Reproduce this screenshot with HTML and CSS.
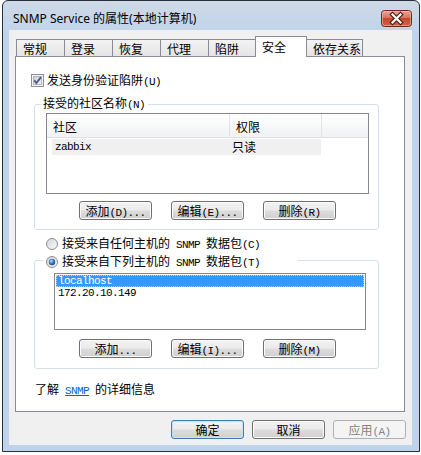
FILE: index.html
```html
<!DOCTYPE html>
<html>
<head>
  <meta charset="utf-8">
  <title>SNMP Service 的属性(本地计算机)</title>
  <link rel="stylesheet" href="styles.css">
</head>
<body>
  <div class="window">
    <div class="titlebar">
      <span class="title">SNMP Service 的属性(本地计算机)</span>
      <div class="close-btn">
        <svg width="31" height="17" viewBox="0 0 31 17">
          <defs>
            <linearGradient id="closeBg" x1="0" y1="0" x2="0" y2="1">
              <stop offset="0" stop-color="#e9aa9c"/>
              <stop offset="0.45" stop-color="#d7735f"/>
              <stop offset="0.5" stop-color="#c8472f"/>
              <stop offset="1" stop-color="#d0644a"/>
            </linearGradient>
          </defs>
          <rect x="0.5" y="0.5" width="30" height="16" rx="3" fill="url(#closeBg)" stroke="#6b2a20"/>
          <rect x="1.5" y="1.5" width="28" height="14" rx="2" fill="none" stroke="#f0b9ac" stroke-opacity="0.6"/>
          <path d="M11.5 4.5 L19.5 12.5 M19.5 4.5 L11.5 12.5" stroke="#4a1a12" stroke-width="4.4" stroke-linecap="square"/>
          <path d="M11.5 4.5 L19.5 12.5 M19.5 4.5 L11.5 12.5" stroke="#ffffff" stroke-width="2.2" stroke-linecap="square"/>
        </svg>
      </div>
    </div>

    <div class="client">
      <div class="tabs">
        <div class="tab">常规</div>
        <div class="tab">登录</div>
        <div class="tab">恢复</div>
        <div class="tab">代理</div>
        <div class="tab">陷阱</div>
        <div class="tab active">安全</div>
        <div class="tab">依存关系</div>
      </div>

      <div class="panel">
        <div class="check-row">
          <svg width="13" height="13" viewBox="0 0 13 13">
            <defs>
              <linearGradient id="cbIn" x1="0" y1="0" x2="1" y2="1">
                <stop offset="0" stop-color="#cbcfd5"/>
                <stop offset="1" stop-color="#f6f6f6"/>
              </linearGradient>
            </defs>
            <rect x="0.5" y="0.5" width="12" height="12" fill="#f4f4f4" stroke="#8e8f8f"/>
            <rect x="2.5" y="2.5" width="8" height="8" fill="url(#cbIn)" stroke="#b3b7bd"/>
            <path d="M3.2 6.3 L5.4 9 L10 3.2" fill="none" stroke="#4b5d8c" stroke-width="1.9"/>
          </svg>
          <span class="label">发送身份验证陷阱<span class="m">(U)</span></span>
        </div>

        <fieldset class="group">
          <legend class="group-title community-title">接受的社区名称<span class="m">(N)</span></legend>
          <div class="listview">
            <div class="lv-header">
              <div class="lv-col">社区</div>
              <div class="lv-col">权限</div>
              <div class="lv-col last"></div>
            </div>
            <div class="lv-row">
              <div class="lv-cell m">zabbix</div>
              <div class="lv-cell">只读</div>
            </div>
          </div>
          <div class="btn-row">
            <div class="btn">添加<span class="m">(D)...</span></div>
            <div class="btn">编辑<span class="m">(E)...</span></div>
            <div class="btn">删除<span class="m">(R)</span></div>
          </div>
        </fieldset>

        <div class="radio-row">
          <svg width="12" height="12" viewBox="0 0 12 12">
            <defs>
              <linearGradient id="rbOff" x1="0" y1="0" x2="1" y2="1">
                <stop offset="0" stop-color="#d2d4d8"/>
                <stop offset="1" stop-color="#fbfbfb"/>
              </linearGradient>
            </defs>
            <circle cx="6" cy="6" r="5.5" fill="url(#rbOff)" stroke="#8f8f8f"/>
          </svg>
          <span class="label">接受来自任何主机的<span class="m"> SNMP </span>数据包<span class="m">(C)</span></span>
        </div>

        <fieldset class="group hosts-group">
          <legend class="group-title hosts-title">
            <div class="radio-row inline">
              <svg width="12" height="12" viewBox="0 0 12 12">
                <defs>
                  <linearGradient id="rbOn" x1="0" y1="0" x2="1" y2="1">
                    <stop offset="0" stop-color="#d2d4d8"/>
                    <stop offset="1" stop-color="#fbfbfb"/>
                  </linearGradient>
                  <radialGradient id="rbDot" cx="0.4" cy="0.35" r="0.7">
                    <stop offset="0" stop-color="#b8e2fa"/>
                    <stop offset="0.5" stop-color="#3d84c6"/>
                    <stop offset="1" stop-color="#163f74"/>
                  </radialGradient>
                </defs>
                <circle cx="6" cy="6" r="5.5" fill="url(#rbOn)" stroke="#8f8f8f"/>
                <circle cx="6" cy="6" r="3.2" fill="url(#rbDot)"/>
              </svg>
              <span class="label">接受来自下列主机的<span class="m"> SNMP </span>数据包<span class="m">(T)</span></span>
            </div>
          </legend>
          <div class="listbox">
            <div class="lb-item selected m">localhost</div>
            <div class="lb-item m">172.20.10.149</div>
          </div>
          <div class="btn-row hosts-btns">
            <div class="btn">添加<span class="m">...</span></div>
            <div class="btn">编辑<span class="m">(I)...</span></div>
            <div class="btn">删除<span class="m">(M)</span></div>
          </div>
        </fieldset>

        <p class="info">了解<span class="m"> <a href="#" class="link">SNMP</a> </span>的详细信息</p>
      </div>

      <div class="footer">
        <div class="btn default">确定</div>
        <div class="btn">取消</div>
        <div class="btn disabled">应用<span class="m">(A)</span></div>
      </div>
    </div>
  </div>
</body>
</html>
```

FILE: styles.css
```css
* {
  margin: 0;
  padding: 0;
  box-sizing: border-box;
}

body {
  background: #fff;
  font-family: "Noto Sans CJK SC", sans-serif;
  font-size: 12px;
  color: #000;
}

/* 等宽的 ASCII 部分 (模拟宋体点阵, 每字 6px) */
.m {
  font-family: "Liberation Mono", "DejaVu Sans Mono", monospace;
  font-size: 11px;
  letter-spacing: -0.6px;
}

/* 窗口外框 */
.window {
  width: 418px;
  height: 452px;
  margin-left: 2px;
  border: 1px solid #27313d;
  border-radius: 6px 6px 0 0;
  background: linear-gradient(#ced9e7 0, #c2d5ea 29px, #bfd3ea 30px);
  padding: 0 7px 6px 6px;
  box-shadow: 0 1px 0 #5fc6df;
  display: flex;
  flex-direction: column;
}

.titlebar {
  height: 29px;
  display: flex;
  align-items: flex-start;
}

.title {
  font-family: "Noto Sans", "Noto Sans CJK SC", sans-serif;
  font-size: 12px;
  line-height: 14px;
  padding: 11px 0 0 4px;
  color: #000;
}

.close-btn {
  margin: 9px 0 0 auto;
  width: 31px;
  height: 17px;
}

.close-btn svg {
  display: block;
}

/* 客户区 */
.client {
  flex: 1;
  background: #f0f0f0;
  padding: 6px 6px 6px 6px;
}

/* 选项卡 */
.tabs {
  display: flex;
  align-items: flex-end;
  height: 21px;
  margin: 0 0 -1px 1px;
  position: relative;
  z-index: 1;
}

.tab {
  height: 17px;
  margin-bottom: 1px;
  border: 1px solid #898c95;
  border-bottom: none;
  background: linear-gradient(#f3f3f3, #e5e5e5);
  padding: 2px 0 0 6px;
  line-height: 14px;
  white-space: nowrap;
}

.tab + .tab {
  margin-left: -1px;
}

.tab:nth-child(1),
.tab:nth-child(2),
.tab:nth-child(3),
.tab:nth-child(4) {
  width: 49px;
}

.tab:nth-child(5) {
  width: 48px;
}

.tab:nth-child(7) {
  width: 57px;
}

.tab.active {
  width: 52px;
  height: 21px;
  margin-bottom: 0;
  background: #fff;
  padding-top: 3px;
  position: relative;
  z-index: 2;
}

.panel {
  width: 390px;
  height: 356px;
  border: 1px solid #898c95;
  background: #fff;
}

/* 复选框 / 单选框 */
.check-row {
  display: flex;
  align-items: center;
  height: 13px;
  margin: 17px 0 0 15px;
}

.check-row svg,
.radio-row svg {
  display: block;
  flex: none;
}

.check-row .label {
  margin-left: 3px;
  line-height: 13px;
}

.radio-row {
  display: flex;
  align-items: center;
  height: 14px;
  margin: 7px 0 0 30px;
}

.radio-row .label {
  margin-left: 4px;
  line-height: 14px;
  white-space: nowrap;
}

.radio-row.inline {
  margin: 0;
}

/* 分组框 */
.group {
  width: 345px;
  margin: 9px 0 0 18px;
  border: 1px solid #d5dfe5;
  border-radius: 3px;
}

.group-title {
  line-height: 14px;
  white-space: nowrap;
}

.community-title {
  width: 107px;
  margin-left: 6px;
  padding: 0 2px;
}

.hosts-group {
  margin-top: 0;
}

.hosts-title {
  width: 255px;
  margin-left: 8px;
  padding: 4px 0 0 3px;
}

/* 列表视图 */
.listview {
  width: 323px;
  height: 81px;
  margin: 1px 0 0 11px;
  border: 1px solid #828790;
  background: #fff;
}

.lv-header {
  display: grid;
  grid-template-columns: 183px 92px 1fr;
  height: 24px;
  border-bottom: 1px solid #dde0e4;
  background: linear-gradient(#ffffff, #f1f2f4);
}

.lv-col {
  padding: 2px 0 0 6px;
  line-height: 21px;
  border-right: 1px solid #e2e3e6;
}

.lv-col.last {
  border-right: none;
}

.lv-row {
  display: grid;
  grid-template-columns: 177px 92px;
  width: 269px;
  height: 16px;
  margin: 1px 0 0 5px;
  background: #f0f0f0;
}

.lv-cell {
  padding-left: 3px;
  line-height: 16px;
}

/* 列表框 */
.listbox {
  width: 312px;
  height: 57px;
  margin: 4px 0 0 19px;
  border: 1px solid #828790;
  padding: 1px;
}

.lb-item {
  height: 12px;
  line-height: 12px;
  padding-left: 2px;
}

.lb-item.selected {
  background: #3399ff;
  color: #fff;
  outline: 1px dotted #a9d2ff;
  outline-offset: -1px;
}

/* 按钮 */
.btn-row {
  display: flex;
  gap: 19px;
  margin: 7px 0 9px 0;
  padding-left: 44px;
}

.hosts-btns {
  margin: 9px 0 10px 0;
}

.btn {
  width: 73px;
  height: 19px;
  border: 1px solid #707070;
  border-radius: 3px;
  background: linear-gradient(#f2f2f2 0%, #ebebeb 48%, #dddddd 52%, #cfcfcf 100%);
  box-shadow: inset 0 0 0 1px #fbfbfb;
  text-align: center;
  line-height: 17px;
  white-space: nowrap;
  cursor: default;
}

.btn.default {
  border-color: #3c7fb1;
  box-shadow: inset 0 0 0 1px #bfe5f8;
}

.btn.disabled {
  border-color: #adb2b5;
  background: #f4f4f4;
  box-shadow: none;
  color: #838383;
}

.info {
  margin: 13px 0 0 19px;
  line-height: 14px;
}

.link {
  color: #0066cc;
  text-decoration: underline;
}

.footer {
  display: flex;
  justify-content: flex-end;
  gap: 8px;
  margin-top: 8px;
}
```
